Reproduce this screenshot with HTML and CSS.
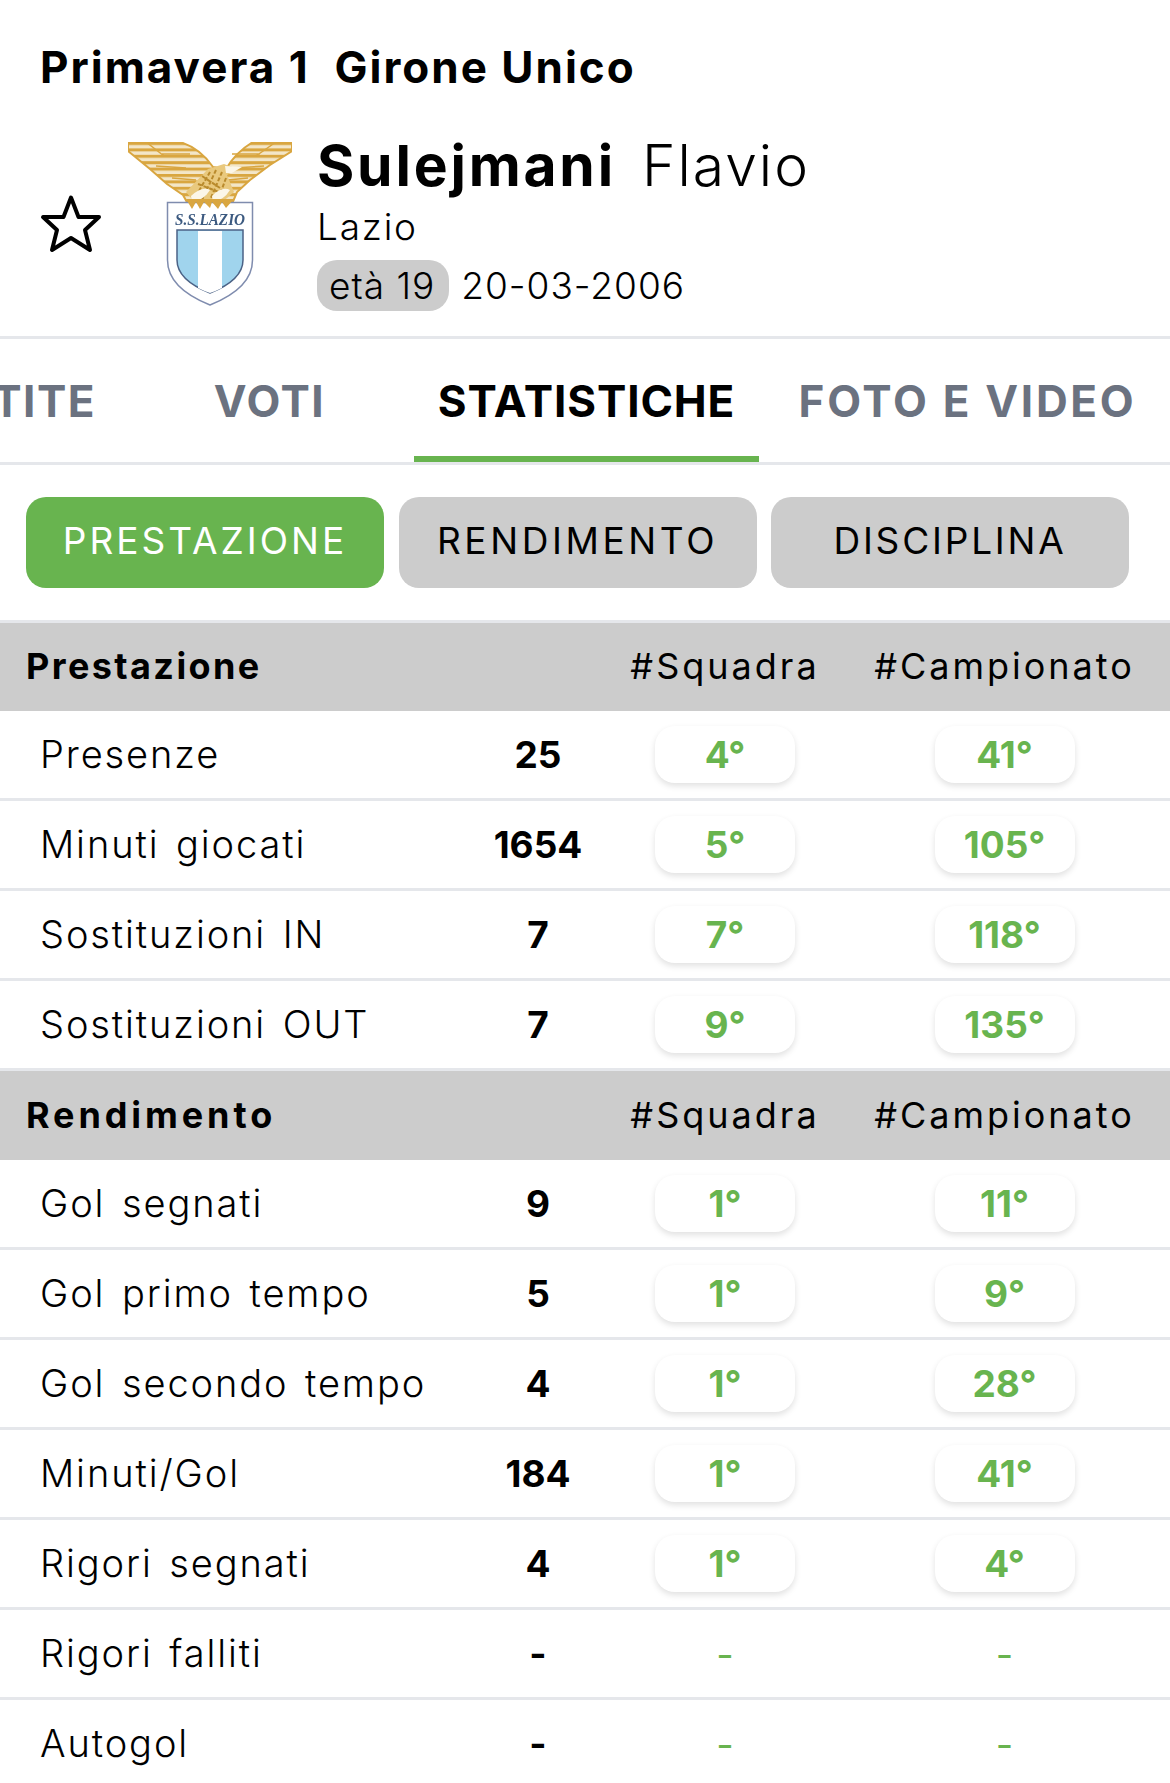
FILE: index.html
```html
<!DOCTYPE html>
<html lang="it">
<head>
<meta charset="utf-8">
<title>Sulejmani Flavio</title>
<link rel="stylesheet" href="styles.css">
</head>
<body>
<header class="head">
  <h1 class="league">Primavera 1&nbsp; Girone Unico</h1>
  <div class="player">
    <svg class="star" viewBox="0 0 60 56"><polygon points="30,1.500 37.5,21 58,21 44,34 49,54 30,42 11,54 16,34 2,21 22.500,21" fill="none" stroke="#000" stroke-width="4" stroke-linejoin="round"/></svg>
    <svg class="crest" viewBox="0 0 164 164">
      <defs>
        <pattern id="st" width="10" height="6.400" patternUnits="userSpaceOnUse"><rect width="10" height="6.400" fill="#f3e6c8"/><rect width="10" height="3" fill="#d9a640"/></pattern>
      </defs>
      <path d="M0 0H52Q72 6 85 25L98 27Q108 10 125 0H164V9L142 23L122 38L109 50L104 62H60L55 53L39 42L22 27L0 9Z" fill="url(#st)" stroke="#d9a640" stroke-width="2"/>
      <path class="feather" d="M18 0L36 14M34 12L62 12M10 8L30 8M28 24L58 26M44 36L68 38M148 0L128 14M132 12L104 12M156 8L134 8M136 24L106 26M120 36L100 38"/>
      <path d="M80 27L96 22L110 27L99 33L106 50L92 62H68L58 50Z" fill="#e9c97e"/>
      <path class="plumage" d="M82 30L68 54M88 28L74 58M94 30L82 58M98 36L90 58M74 34L92 46M70 42L96 52"/>
      <path d="M97 24L114 25L104 31H98Z" fill="#fbf6e8"/>
      <path d="M63 54Q74 44 82 48Q76 58 64 60ZM84 54Q94 44 102 48Q96 58 85 60Z" fill="#fbf6e8"/>
      <path d="M39.500 60.500H124.500V118Q124.500 146 82 163Q39.500 146 39.500 118Z" fill="#fff" stroke="#7f8cae" stroke-width="1.500"/>
      <path d="M58 57L64 67L68 60L72 67L76 60L82 66L84 60L90 67L94 60L98 66L106 57Z" fill="#d9a640"/>
      <text class="crest-name" x="82" y="83" text-anchor="middle" textLength="70" lengthAdjust="spacingAndGlyphs">S.S.LAZIO</text>
      <path d="M49 88H115V118Q115 138 82 151Q49 138 49 118Z" fill="#a0d4ed" stroke="#4b6286" stroke-width="1.500"/>
      <path d="M70 89H94V146Q88 149 82 151Q76 149 70 146Z" fill="#fff"/>
    </svg>
    <div class="info">
      <div class="name"><strong>Sulejmani</strong><span class="first">Flavio</span></div>
      <div class="team">Lazio</div>
      <div class="born"><span class="age">età 19</span><span>20-03-2006</span></div>
    </div>
  </div>
</header>

<nav class="tabs">
  <a class="tab tab-part">PARTITE</a>
  <a class="tab tab-voti">VOTI</a>
  <a class="tab tab-stat active">STATISTICHE</a>
  <a class="tab tab-foto">FOTO E VIDEO</a>
</nav>

<div class="subnav">
  <a class="sub on">PRESTAZIONE</a>
  <a class="sub sub-rend">RENDIMENTO</a>
  <a class="sub sub-disc">DISCIPLINA</a>
</div>

<main class="stats">
  <div class="band"><b class="band-title">Prestazione</b><span class="band-col">#Squadra</span><span class="band-col">#Campionato</span></div>
  <div class="row"><span>Presenze</span><b>25</b><i class="rank">4°</i><i class="rank">41°</i></div>
  <div class="row"><span>Minuti giocati</span><b>1654</b><i class="rank">5°</i><i class="rank">105°</i></div>
  <div class="row"><span>Sostituzioni IN</span><b>7</b><i class="rank">7°</i><i class="rank">118°</i></div>
  <div class="row"><span>Sostituzioni OUT</span><b>7</b><i class="rank">9°</i><i class="rank">135°</i></div>
  <div class="band band-next"><b class="band-title">Rendimento</b><span class="band-col">#Squadra</span><span class="band-col">#Campionato</span></div>
  <div class="row"><span>Gol segnati</span><b>9</b><i class="rank">1°</i><i class="rank">11°</i></div>
  <div class="row"><span>Gol primo tempo</span><b>5</b><i class="rank">1°</i><i class="rank">9°</i></div>
  <div class="row"><span>Gol secondo tempo</span><b>4</b><i class="rank">1°</i><i class="rank">28°</i></div>
  <div class="row"><span>Minuti/Gol</span><b>184</b><i class="rank">1°</i><i class="rank">41°</i></div>
  <div class="row"><span>Rigori segnati</span><b>4</b><i class="rank">1°</i><i class="rank">4°</i></div>
  <div class="row"><span>Rigori falliti</span><b>-</b><i class="none">-</i><i class="none">-</i></div>
  <div class="row"><span>Autogol</span><b>-</b><i class="none">-</i><i class="none">-</i></div>
</main>
</body>
</html>
```

FILE: styles.css
```css
* { box-sizing: border-box; }
html, body { margin: 0; padding: 0; }
body {
  width: 1170px;
  height: 1783px;
  overflow: hidden;
  background: #fff;
  color: #000;
  font-family: Inter, "Noto Sans", sans-serif;
}
.head { padding: 39px 0 25px 41px; border-bottom: 3px solid #e5e7eb; }
.league { margin: 0 0 43px -1px; font-size: 44px; letter-spacing: 2px; line-height: 56px; font-weight: 700; white-space: nowrap; }
.player { display: flex; align-items: flex-start; }
.star { width: 60px; height: 56px; margin: 58px 27px 0 0; flex: none; overflow: visible; }
.crest { width: 164px; height: 164px; margin: 4px 26px 0 0; flex: none; filter: blur(.4px); }
.feather { fill: none; stroke: #d9a640; stroke-width: 1.5; }
.plumage { fill: none; stroke: #b98a2c; stroke-width: 2; stroke-dasharray: 4 2; }
.crest-name { font: italic 700 17px "Liberation Serif", serif; fill: #3c5a80; }
.info { display: flex; flex-direction: column; }
.name { margin-left: -1px; font-size: 57px; line-height: 56px; white-space: nowrap; }
.name strong { font-weight: 700; letter-spacing: 2.8px; }
.first { margin-left: 26px; font-weight: 300; letter-spacing: 2px; }
.team { margin: 10px 0 0 -1px; font-size: 37px; letter-spacing: 1.800px; line-height: 46px; font-weight: 300; }
.born { margin-top: 10px; display: flex; align-items: center; gap: 12px; font-size: 37px; letter-spacing: 1px; font-weight: 300; line-height: 51px; }
.age { margin-left: -1px; background: #ccc; border-radius: 20px; padding: 0 14px 0 12px; height: 51px; }

.tabs { display: flex; justify-content: flex-end; height: 126px; border-bottom: 3px solid #e5e7eb; overflow: hidden; }
.tab { flex: none; height: 123px; line-height: 125px; text-align: center; font-size: 44px; font-weight: 700; color: #6b7280; white-space: nowrap; }
.tab-part { padding-right: 29px; letter-spacing: 1.500px; }
.tab-voti { width: 289px; letter-spacing: 1.500px; }
.tab-stat { width: 345px; letter-spacing: .9px; }
.tab-foto { width: 411px; padding-left: 6px; letter-spacing: 2.700px; }
.active { color: #000; border-bottom: 6px solid #68b44f; }

.subnav { display: flex; gap: 14.5px; padding: 32px 0 32px 26px; border-bottom: 3px solid #e5e7eb; }
.sub { width: 358px; height: 91px; line-height: 88px; text-align: center; background: #ccc; border-radius: 20px; font-size: 37px; letter-spacing: 3px; font-weight: 400; color: #000; }
.sub-rend { letter-spacing: 3.600px; }
.sub-disc { letter-spacing: 2.800px; }
.on { background: #68b44f; color: #fff; }

.band, .row { display: grid; align-items: center; white-space: nowrap; }
.band { height: 88px; padding: 0 0 2px 26px; background: #ccc; font-size: 36px; letter-spacing: 3px; grid-template-columns: 572px 254px 305px; }
.band-next { height: 89px; }
.band-title { font-weight: 700; letter-spacing: 2.400px; }
.band-next .band-title { letter-spacing: 3.900px; }
.band-col { text-align: center; font-weight: 400; }
.row { height: 90px; padding-left: 40px; border-bottom: 3px solid #e5e7eb; font-size: 38px; font-weight: 300; grid-template-columns: 438px 120px 254px 305px; }
.row span { padding-bottom: 2px; letter-spacing: 1.900px; word-spacing: 4px; }
.row b { text-align: center; font-weight: 700; font-size: 37px; }
.rank { justify-self: center; width: 140px; height: 57px; line-height: 57px; text-align: center; border-radius: 20px; background: #fff; box-shadow: 0 3px 6px rgba(0,0,0,.12); color: #68b44f; font-style: normal; font-size: 37px; font-weight: 700; }
.none { text-align: center; color: #68b44f; font-style: normal; font-weight: 400; }
```
